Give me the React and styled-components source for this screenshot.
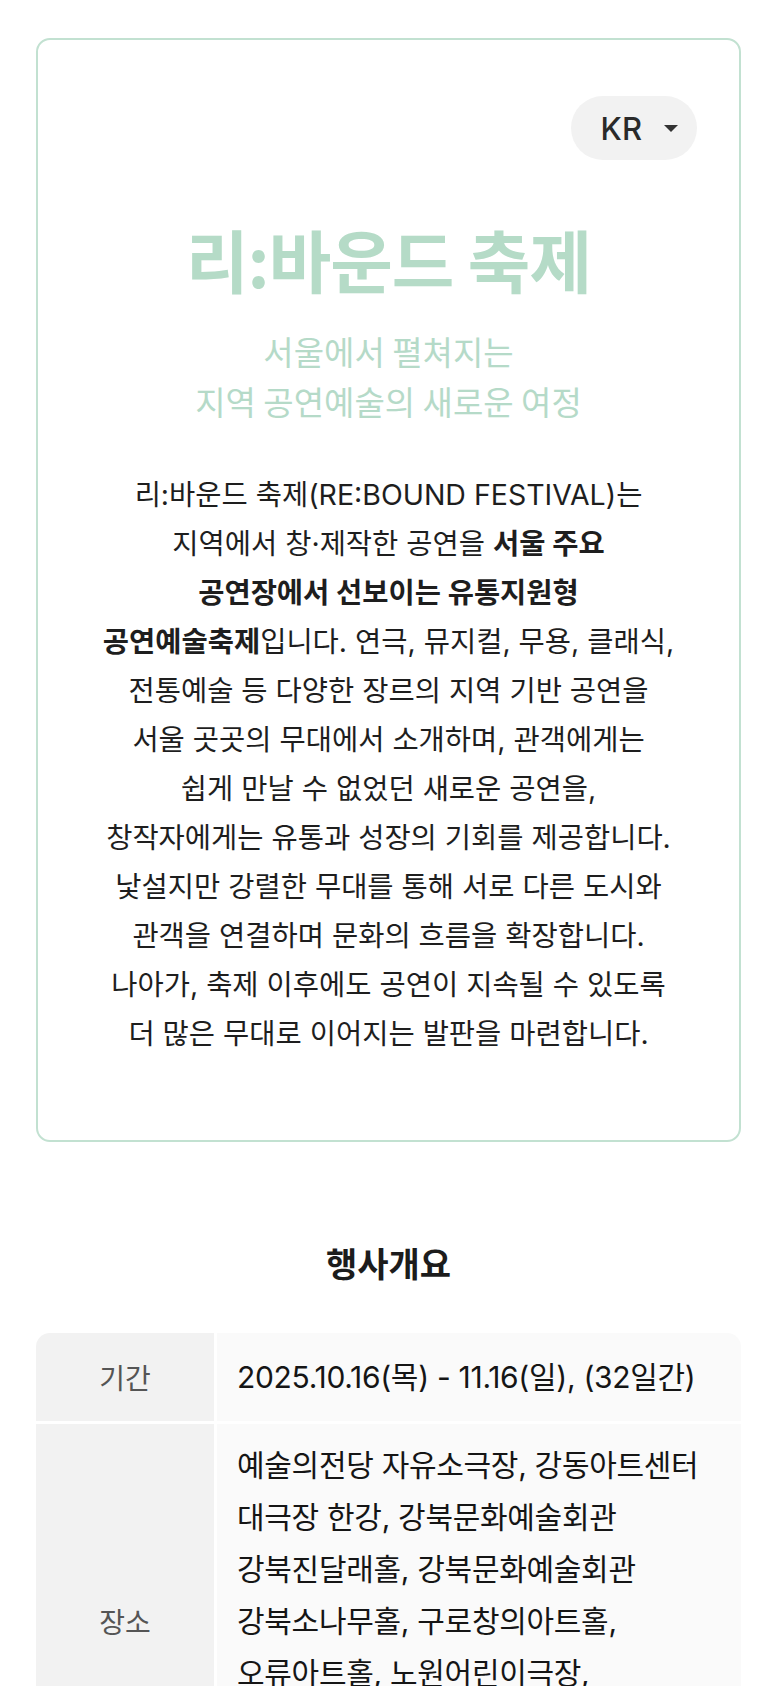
import React from 'react';
import styled, { createGlobalStyle } from 'styled-components';

const GlobalStyle = createGlobalStyle`
  body {
    margin: 0;
    background: #ffffff;
    font-family: Inter, "Noto Sans CJK KR", "Noto Sans", sans-serif;
    color: #1c1c1c;
  }
`;

const Page = styled.main`
  padding: 38px 36px 0;
`;

const IntroCard = styled.section`
  display: flex;
  flex-direction: column;
  align-items: center;
  border: 2px solid #c2e1d1;
  border-radius: 14px;
  padding: 56px 42px 82px;
`;

const LangButton = styled.button`
  align-self: flex-end;
  display: flex;
  align-items: center;
  gap: 22px;
  height: 64px;
  padding: 0 19px 0 30px;
  border: 0;
  border-radius: 32px;
  background: #f2f2f2;
  font-family: Inter, Roboto, sans-serif;
  font-size: 31px;
  font-weight: 500;
  color: #2a2a2a;
`;

const Caret = styled.span`
  width: 0;
  height: 0;
  border-left: 7px solid transparent;
  border-right: 7px solid transparent;
  border-top: 7px solid #333;
`;

const Title = styled.h1`
  margin: 60px 0 0;
  font-family: "Noto Sans CJK KR", sans-serif;
  font-size: 68px;
  font-weight: 700;
  line-height: 78px;
  letter-spacing: -1px;
  color: #b5dbc7;
`;

const Subtitle = styled.p`
  margin: 28px 0 0;
  font-family: "Noto Sans CJK KR", sans-serif;
  font-size: 33px;
  font-weight: 400;
  line-height: 50px;
  text-align: center;
  color: #b5dac8;
`;

const Description = styled.p`
  margin: 44px 0 0;
  font-size: 28.5px;
  font-weight: 400;
  line-height: 49px;
  text-align: center;
  white-space: nowrap;
  color: #1e1e1e;

  strong {
    font-weight: 700;
  }
`;

const SectionTitle = styled.h2`
  margin: 100px 0 0;
  font-family: "Noto Sans CJK KR", sans-serif;
  font-size: 34px;
  font-weight: 700;
  line-height: 42px;
  text-align: center;
  color: #1c1c1c;
`;

const InfoTable = styled.dl`
  display: grid;
  grid-template-columns: 178px 1fr;
  gap: 3px;
  margin: 49px 0 0;
  border-radius: 14px;
  overflow: hidden;
`;

const InfoLabel = styled.dt`
  display: flex;
  align-items: center;
  justify-content: center;
  background: #f2f2f2;
  font-size: 28px;
  color: #555555;
`;

const InfoValue = styled.dd`
  margin: 0;
  padding: ${props => (props.$multi ? '15px 20px' : '18px 20px')};
  background: #fafafa;
  font-size: 30px;
  line-height: 52px;
  letter-spacing: -0.3px;
  white-space: nowrap;
  color: #151515;
`;

const description = [
  <>리:바운드 축제(RE:BOUND FESTIVAL)는</>,
  <>지역에서 창·제작한 공연을 <strong>서울 주요</strong></>,
  <strong>공연장에서 선보이는 유통지원형</strong>,
  <><strong>공연예술축제</strong>입니다. 연극, 뮤지컬, 무용, 클래식,</>,
  <>전통예술 등 다양한 장르의 지역 기반 공연을</>,
  <>서울 곳곳의 무대에서 소개하며, 관객에게는</>,
  <>쉽게 만날 수 없었던 새로운 공연을,</>,
  <>창작자에게는 유통과 성장의 기회를 제공합니다.</>,
  <>낯설지만 강렬한 무대를 통해 서로 다른 도시와</>,
  <>관객을 연결하며 문화의 흐름을 확장합니다.</>,
  <>나아가, 축제 이후에도 공연이 지속될 수 있도록</>,
  <>더 많은 무대로 이어지는 발판을 마련합니다.</>
];

const info = [
  { label: '기간', lines: ['2025.10.16(목) - 11.16(일), (32일간)'] },
  {
    label: '장소',
    lines: [
      '예술의전당 자유소극장, 강동아트센터',
      '대극장 한강, 강북문화예술회관',
      '강북진달래홀, 강북문화예술회관',
      '강북소나무홀, 구로창의아트홀,',
      '오류아트홀, 노원어린이극장,',
      '노원문화예술회관 대공연장,',
      '서울남산국악당 외'
    ]
  }
];

function Lines ({ items }) {
  return items.map((line, index) => (
    <React.Fragment key={index}>
      {index > 0 && <br/>}
      {line}
    </React.Fragment>
  ));
}

export default function App () {
  return (
    <>
      <GlobalStyle/>
      <Page>
        <IntroCard>
          <LangButton type="button">
            KR
            <Caret/>
          </LangButton>
          <Title>리:바운드 축제</Title>
          <Subtitle>
            서울에서 펼쳐지는<br/>
            지역 공연예술의 새로운 여정
          </Subtitle>
          <Description>
            <Lines items={description}/>
          </Description>
        </IntroCard>

        <SectionTitle>행사개요</SectionTitle>
        <InfoTable>
          {info.map(row => (
            <React.Fragment key={row.label}>
              <InfoLabel>{row.label}</InfoLabel>
              <InfoValue $multi={row.lines.length > 1}>
                <Lines items={row.lines}/>
              </InfoValue>
            </React.Fragment>
          ))}
        </InfoTable>
      </Page>
    </>
  );
}
